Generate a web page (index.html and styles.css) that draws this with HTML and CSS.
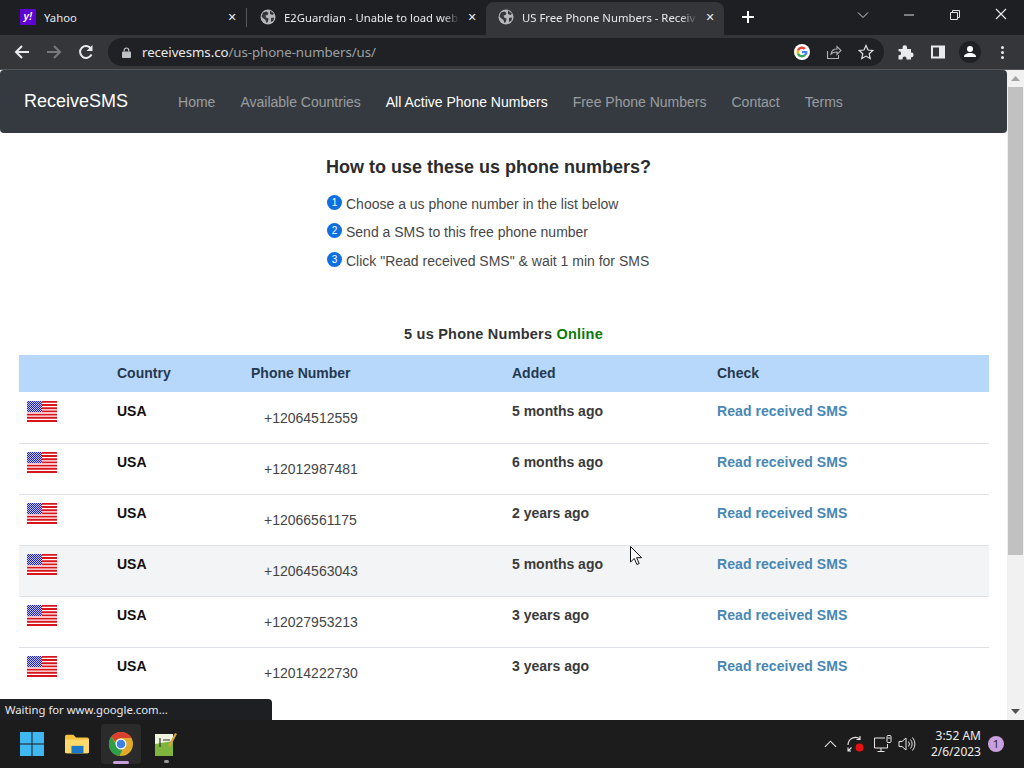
FILE: index.html
```html
<!DOCTYPE html>
<html lang="en">
<head>
<meta charset="utf-8">
<title>US Free Phone Numbers</title>
<link rel="stylesheet" href="styles.css">
</head>
<body>
<svg class="defs" width="0" height="0" aria-hidden="true">
  <defs>
    <pattern id="stars" width="2" height="2" patternUnits="userSpaceOnUse"><rect width="2" height="2" fill="#1c1ccf"/><rect width="1" height="1" fill="#c8c8f5"/><rect x="1" y="1" width="1" height="1" fill="#c8c8f5"/></pattern>
    <symbol id="flag" viewBox="0 0 30 21">
      <rect width="30" height="21" fill="#fff"/>
      <path d="M0 0.8h30M0 4h30M0 7.2h30M0 10.4h30M0 13.6h30M0 16.8h30M0 20h30" stroke="#d8141c" stroke-width="1.9"/>
      <rect width="15" height="11" fill="url(#stars)"/>
    </symbol>
    <symbol id="globe" viewBox="0 0 16 16">
      <circle cx="8" cy="8" r="7.5" fill="#b4b6b9"/>
      <path d="M3 3.500l3.500-1 2 1.500-1 2-2 .5.5 2 2.500 1-.5 3-1.500 1.500-1-3-2-1.500-2-2zM10 1.500l4 3-1.500 1.500-2.500-1zM11 9l3-.5-.5 3-2.500 1.500z" fill="#35363a"/>
    </symbol>
  </defs>
</svg>
<div class="tabstrip">
  <div class="tab tab-yahoo">
    <span class="yahoo-icon">y!</span><span class="tab-title">Yahoo</span><span class="tab-x">✕</span>
  </div>
  <div class="tab-sep"></div>
  <div class="tab tab-e2">
    <svg class="tab-icon"><use href="#globe"/></svg><span class="tab-title fade">E2Guardian - Unable to load web</span><span class="tab-x">✕</span>
  </div>
  <div class="tab tab-active">
    <svg class="tab-icon"><use href="#globe"/></svg><span class="tab-title fade">US Free Phone Numbers - Receiv</span><span class="tab-x">✕</span>
  </div>
  <svg class="newtab" viewBox="0 0 12 12"><path d="M6 0v12M0 6h12" stroke="#fff" stroke-width="2"/></svg>
  <div class="winctl">
    <svg viewBox="0 0 12 12" class="wc wc-chev"><path d="M1 3.500l5 5 5-5" fill="none" stroke="#d4d4d4"/></svg>
    <svg viewBox="0 0 12 12" class="wc wc-min"><path d="M1 6h10" stroke="#e0e0e0"/></svg>
    <svg viewBox="0 0 12 12" class="wc wc-max"><path d="M1.500 3.500h7v7h-7zM3.500 3V1.500h7v7H9" fill="none" stroke="#e0e0e0"/></svg>
    <svg viewBox="0 0 12 12" class="wc wc-close"><path d="M1 1l10 10M11 1L1 11" stroke="#eee" stroke-width="1.100"/></svg>
  </div>
</div>
<div class="toolbar">
  <svg class="tb-btn" viewBox="0 0 16 16"><path d="M15 8H2.500M8 2L2 8l6 6" fill="none" stroke="#e8eaed" stroke-width="2"/></svg>
  <svg class="tb-btn" viewBox="0 0 16 16"><path d="M1 8h12.500M8 2l6 6-6 6" fill="none" stroke="#77797c" stroke-width="2"/></svg>
  <svg class="tb-btn" viewBox="0 0 16 16"><path d="M13.500 10.500A6 6 0 1 1 13 4.500" fill="none" stroke="#e8eaed" stroke-width="2"/><path d="M14.500 1v6h-6z" fill="#e8eaed"/></svg>
  <div class="omnibox">
    <svg class="lock" viewBox="0 0 10 12"><path d="M2.500 5V3.500a2.500 2.500 0 0 1 5 0V5" fill="none" stroke="#bdc1c6" stroke-width="1.300"/><rect y="5" width="10" height="7" rx="1" fill="#bdc1c6"/></svg>
    <span class="url"><span class="url-host">receivesms.co</span>/us-phone-numbers/us/</span>
    <svg class="omni-g" viewBox="0 0 16 16">
      <circle cx="8" cy="8" r="8" fill="#fff"/>
      <path d="M8 5a3 3 0 0 1 2 .8l1.800-1.800A5.600 5.600 0 0 0 3 5.500l2 1.600A3.200 3.200 0 0 1 8 5z" fill="#ea4335"/>
      <path d="M3 5.500a5.600 5.600 0 0 0 0 5l2-1.600a3.200 3.200 0 0 1 0-1.800z" fill="#fbbc05"/>
      <path d="M3 10.500a5.600 5.600 0 0 0 8.700 1.500l-1.900-1.500A3.200 3.200 0 0 1 5 8.900z" fill="#34a853"/>
      <path d="M13.500 8c0-.4 0-.7-.1-1H8v2.300h3.100a2.700 2.700 0 0 1-1.300 1.200l1.900 1.500A5.500 5.500 0 0 0 13.500 8z" fill="#4285f4"/>
    </svg>
    <svg class="omni-i" viewBox="0 0 16 16"><path d="M1.500 7v7.500h11V11M5 10c.5-3 3-5 6-5V2.500L15 6.500l-4 4V8c-2.500 0-4.500.5-6 2z" fill="none" stroke="#aeb1b5" stroke-width="1.100"/></svg>
    <svg class="omni-i omni-star" viewBox="0 0 16 16"><path d="M8 1.500l2 4.500 4.800.5-3.600 3.200 1 4.800L8 12.100l-4.200 2.400 1-4.800L1.200 6.500 6 6z" fill="none" stroke="#dfe1e4" stroke-width="1.200"/></svg>
  </div>
  <svg class="tb-ext" viewBox="0 0 16 16"><path d="M.5 5h4V3.500a2.300 2.300 0 0 1 4.600 0V5H13v3.600h.3a2.300 2.300 0 0 1 0 4.600H13V15.500H8.500v-1a2 2 0 0 0-4 0v1H.5v-4.200h.6a2 2 0 0 0 0-4H.5z" fill="#e8eaed"/></svg>
  <svg class="tb-ext" viewBox="0 0 16 16"><path d="M1 1.500h14v13H1z" fill="#e8eaed"/><rect x="3" y="3.500" width="6" height="9" fill="#35363a"/></svg>
  <div class="avatar"><svg viewBox="0 0 16 16"><circle cx="8" cy="5" r="3" fill="#fff"/><path d="M2 13c0-3 3-4 6-4s6 1 6 4z" fill="#fff"/></svg></div>
  <div class="kebab"><i></i><i></i><i></i></div>
</div>
<div class="viewport">
  <main class="page">
    <nav class="navbar">
      <a class="brand">ReceiveSMS</a>
      <div class="navlinks">
        <a>Home</a>
        <a>Available Countries</a>
        <a class="current">All Active Phone Numbers</a>
        <a>Free Phone Numbers</a>
        <a>Contact</a>
        <a>Terms</a>
      </div>
    </nav>
    <section class="howto">
      <h2>How to use these us phone numbers?</h2>
      <p><span class="num">1</span>Choose a us phone number in the list below</p>
      <p><span class="num">2</span>Send a SMS to this free phone number</p>
      <p><span class="num">3</span>Click "Read received SMS" &amp; wait 1 min for SMS</p>
    </section>
    <h3 class="count">5 us Phone Numbers <span class="online">Online</span></h3>
    <table class="numbers">
      <thead>
        <tr><th class="c-flag"></th><th class="c-country">Country</th><th class="c-phone">Phone Number</th><th class="c-added">Added</th><th>Check</th></tr>
      </thead>
      <tbody>
        <tr><td><svg class="flag"><use href="#flag"/></svg></td><td class="country">USA</td><td class="phone">+12064512559</td><td class="added">5 months ago</td><td><a class="read">Read received SMS</a></td></tr>
        <tr><td><svg class="flag"><use href="#flag"/></svg></td><td class="country">USA</td><td class="phone">+12012987481</td><td class="added">6 months ago</td><td><a class="read">Read received SMS</a></td></tr>
        <tr><td><svg class="flag"><use href="#flag"/></svg></td><td class="country">USA</td><td class="phone">+12066561175</td><td class="added">2 years ago</td><td><a class="read">Read received SMS</a></td></tr>
        <tr class="hover"><td><svg class="flag"><use href="#flag"/></svg></td><td class="country">USA</td><td class="phone">+12064563043</td><td class="added">5 months ago</td><td><a class="read">Read received SMS</a></td></tr>
        <tr><td><svg class="flag"><use href="#flag"/></svg></td><td class="country">USA</td><td class="phone">+12027953213</td><td class="added">3 years ago</td><td><a class="read">Read received SMS</a></td></tr>
        <tr><td><svg class="flag"><use href="#flag"/></svg></td><td class="country">USA</td><td class="phone">+12014222730</td><td class="added">3 years ago</td><td><a class="read">Read received SMS</a></td></tr>
      </tbody>
    </table>
  </main>
  <div class="scrollbar">
    <svg class="sb-arrow" viewBox="0 0 9 5"><path d="M0 5l4.500-5L9 5z" fill="#a3a3a3"/></svg>
    <div class="sb-thumb"></div>
    <svg class="sb-arrow sb-down" viewBox="0 0 9 5"><path d="M0 0l4.500 5L9 0z" fill="#505050"/></svg>
  </div>
  <div class="status">Waiting for www.google.com...</div>
  <svg class="cursor" viewBox="0 0 12 20"><path d="M.5.500v15.500l3.800-3.500 2.600 6 2.300-1-2.600-5.800h5z" fill="#fff" stroke="#111"/></svg>
</div>
<footer class="taskbar">
  <div class="task-apps">
    <div class="app"><svg viewBox="0 0 24 24"><path d="M0 0h11.500v11.500H0zM12.500 0H24v11.500H12.500zM0 12.500h11.500V24H0zM12.500 12.500H24V24H12.500z" fill="#3fb8f2"/></svg></div>
    <div class="app"><svg viewBox="0 0 26 22"><path d="M0 3a2 2 0 0 1 2-2h7l3 3h12a2 2 0 0 1 2 2v13a2 2 0 0 1-2 2H2a2 2 0 0 1-2-2z" fill="#f5c33f"/><path d="M0 6h26v13a2 2 0 0 1-2 2H2a2 2 0 0 1-2-2z" fill="#fcd96a"/><rect x="7" y="13" width="13" height="8" fill="#1d78c8"/></svg></div>
    <div class="app app-active"><svg viewBox="0 0 24 24"><circle cx="12" cy="12" r="12" fill="#e0a92a"/><path d="M12 0a12 12 0 0 1 10.400 6H12a6 6 0 0 0-5.700 4L2.500 4.500A12 12 0 0 1 12 0z" fill="#d9402f"/><path d="M2.500 4.500L7 12.500a6 6 0 0 0 7 3.200L10.500 24A12 12 0 0 1 2.500 4.500z" fill="#2f9e48"/><circle cx="12" cy="12" r="5.500" fill="#fff"/><circle cx="12" cy="12" r="4.300" fill="#3b82e6"/></svg><span class="app-bar"></span></div>
    <div class="app"><svg viewBox="0 0 22 24"><path d="M0 2h18v22H0z" fill="#eef3dc"/><path d="M0 12l18-3v15H0z" fill="#7fb53c"/><path d="M5 6v9M8 8h7" stroke="#333" stroke-width="1.200"/><path d="M13 14L20 1l2 1-7 13z" fill="#d6a23a"/></svg><span class="app-dot"></span></div>
  </div>
  <div class="tray">
    <svg class="tray-i" viewBox="0 0 14 8"><path d="M1 7l6-6 6 6" fill="none" stroke="#e8e8e8" stroke-width="1.200"/></svg>
    <svg class="tray-sync" viewBox="0 0 18 18"><path d="M1 10a7.500 7.500 0 0 1 12-6M13 1v3.500H9.500M4 16H1v-3.500M1.500 15.500l3-3" fill="none" stroke="#e8e8e8" stroke-width="1.100"/><circle cx="12.500" cy="12.500" r="4" fill="#e81212"/></svg>
    <svg class="tray-net" viewBox="0 0 18 18"><path d="M11 3H.5v10h13V9M7 13v3M3.500 16.500h7" fill="none" stroke="#e8e8e8"/><rect x="13" y=".5" width="4" height="7" rx="1" fill="none" stroke="#e8e8e8"/><path d="M13.500 3h3" stroke="#e8e8e8"/></svg>
    <svg class="tray-vol" viewBox="0 0 18 18"><path d="M1 6.500h3L8 3v12L4 11.500H1zM10.500 6.500a4 4 0 0 1 0 5M12.500 4.500a7 7 0 0 1 0 9M14.500 2.500a10 10 0 0 1 0 13" fill="none" stroke="#e8e8e8"/></svg>
    <div class="clock"><span>3:52 AM</span><span>2/6/2023</span></div>
    <span class="notif">1</span>
  </div>
</footer>
</body>
</html>
```
FILE: styles.css
```css
* { box-sizing: border-box; }
html, body { margin: 0; height: 100%; overflow: hidden; }
body {
  display: flex;
  flex-direction: column;
  width: 1024px;
  height: 768px;
  font-family: "Liberation Sans", Arial, sans-serif;
  background: #fff;
}
.defs { position: absolute; }

/* tab strip */
.tabstrip {
  height: 35px;
  flex: none;
  display: flex;
  background: #1e1f22;
  color: #e8eaed;
  font: 11.300px "Noto Sans", "Open Sans", sans-serif;
  padding-top: 2px;
}
.tab {
  display: flex;
  align-items: center;
  height: 33px;
  padding-bottom: 3px;
  position: relative;
}
.tab-yahoo { width: 246px; padding-left: 20px; padding-right: 6px; }
.tab-sep { width: 1px; height: 19px; margin-top: 6px; background: #54565a; }
.tab-e2 { width: 239px; padding-left: 13px; padding-right: 6px; }
.tab-active {
  width: 238px;
  background: #35363a;
  border-radius: 8px 8px 0 0;
  padding-left: 12px;
  padding-right: 6px;
}
.yahoo-icon {
  width: 16px; height: 16px;
  margin-right: 8px;
  background: #5f01d1;
  color: #fff;
  font: italic bold 10px/16px "Liberation Sans", sans-serif;
  text-align: center;
  flex: none;
}
.tab-icon { width: 16px; height: 16px; margin-right: 8px; flex: none; }
.tab-title { flex: 1; min-width: 0; white-space: nowrap; overflow: hidden; }
.fade { -webkit-mask-image: linear-gradient(90deg, #000 90%, transparent); mask-image: linear-gradient(90deg, #000 90%, transparent); }
.tab-x { width: 16px; flex: none; text-align: center; font: bold 11px "DejaVu Sans", sans-serif; color: #e8eaed; margin-left: 4px; }
.newtab { width: 12px; height: 12px; margin: 9px 0 0 18px; flex: none; }
.winctl { display: flex; margin-left: auto; position: relative; flex: none; width: 190px; }
.wc { position: absolute; top: 7px; width: 12px; height: 12px; }
.wc-chev { left: 23px; }
.wc-min { left: 69px; }
.wc-max { left: 115px; }
.wc-close { left: 161px; top: 6px; }

/* toolbar */
.toolbar {
  height: 35px;
  flex: none;
  display: flex;
  align-items: center;
  background: #35363a;
  padding-left: 14px;
  border-bottom: 1px solid #55565a;
}
.tb-btn { width: 16px; height: 16px; margin-right: 16px; flex: none; }
.omnibox {
  width: 776px;
  height: 28px;
  background: #202124;
  border-radius: 14px;
  display: flex;
  align-items: center;
  padding-left: 14px;
  margin-left: -2px;
  flex: none;
}
.lock { width: 9px; height: 11px; margin-right: 11px; flex: none; }
.url { font: 13.300px "Noto Sans", "Open Sans", sans-serif; color: #9aa0a6; flex: 1; white-space: nowrap; letter-spacing: -.08px; }
.url-host { color: #e8eaed; }
.omni-g { width: 16px; height: 16px; margin-right: 16px; flex: none; }
.omni-i { width: 16px; height: 16px; margin-right: 16px; flex: none; }
.omni-star { margin-right: 10px; }
.tb-ext { width: 16px; height: 16px; margin-left: 14px; flex: none; }
.tb-ext + .tb-ext { margin-left: 16px; }
.avatar { width: 22px; height: 22px; border-radius: 50%; background: #202124; margin-left: 13px; padding: 3px; flex: none; }
.avatar svg { display: block; width: 16px; height: 16px; }
.kebab { display: flex; flex-direction: column; gap: 2px; margin-left: 20px; }
.kebab i { width: 3px; height: 3px; border-radius: 50%; background: #e8eaed; }

/* viewport */
.viewport { flex: 1; min-height: 0; display: flex; position: relative; overflow: hidden; background: #fff; }
.page { flex: 1; min-width: 0; overflow: hidden; }
.navbar {
  height: 63px;
  background: #343a40;
  border-radius: 4px;
  display: flex;
  align-items: center;
  padding-left: 24px;
}
.brand { color: #fff; font-size: 18px; margin-right: 50px; }
.navlinks { display: flex; gap: 25px; font-size: 14px; color: rgba(255,255,255,.5); }
.navlinks .current { color: #fff; }

.howto { margin: 24px 0 0 326px; color: #474747; }
.howto h2 { margin: 0 0 11.700px; font-size: 18px; line-height: 21px; color: #2a2c2e; }
.howto p { margin: 0; height: 28.500px; font-size: 14px; line-height: 28.500px; display: flex; }
.num {
  width: 15px; height: 15px;
  margin: 5px 4px 0 1px;
  border-radius: 50%;
  background: #0d6fe0;
  color: #fff;
  font-size: 10px;
  line-height: 15px;
  text-align: center;
  flex: none;
}
.count { margin: 50.800px 0 12px; text-align: center; font-size: 14.500px; line-height: 17px; color: #333; letter-spacing: .22px; }
.online { color: #0a7a0a; }

.numbers { width: 970px; margin-left: 19px; border-collapse: separate; border-spacing: 0; table-layout: fixed; font-size: 14px; }
.numbers th { height: 38px; padding: 0; border-bottom: 1px solid #fff; text-align: left; background: #b8d8fb; color: #24384e; }
.c-flag { width: 98px; }
.c-country { width: 134px; }
.c-phone { width: 261px; }
.c-added { width: 205px; }
.numbers td { height: 51px; padding: 8px 0 0; vertical-align: top; border-bottom: 1px solid #dee2e6; font-weight: bold; color: #212529; line-height: 20px; }
.numbers td:first-child { padding: 8px 0 0 8px; }
.numbers tr.hover td { background: #f3f4f5; }
.numbers tbody tr:last-child td { border-bottom: 0; }
.flag { display: block; width: 30px; height: 21px; }
.country { color: #101010 !important; }
.numbers td.phone { font-weight: normal; padding: 15px 0 0 13px; color: #444; }
.numbers td.added { color: #3a3a3a; }
.read { color: #4887b4; letter-spacing: .07px; }

.scrollbar { width: 17px; flex: none; background: #f1f1f1; display: flex; flex-direction: column; align-items: center; position: relative; padding-top: 6px; }
.sb-arrow { width: 9px; height: 5px; flex: none; }
.sb-thumb { width: 15px; height: 468px; margin-top: 6px; background: #c1c1c1; flex: none; }
.sb-down { margin-top: auto; margin-bottom: 6px; }
.status {
  position: absolute;
  left: 0; bottom: 0;
  width: 272px; height: 21px;
  padding: 2px 0 0 5px;
  background: #1e1f22;
  color: #e8eaed;
  border-radius: 0 4px 0 0;
  font: 11.300px/18px "Noto Sans", "Open Sans", sans-serif;
}
.cursor { position: absolute; left: 630px; top: 476px; width: 12px; height: 20px; }

/* taskbar */
.taskbar { height: 48px; flex: none; background: #1c1c1c; display: flex; justify-content: space-between; align-items: center; color: #fff; }
.task-apps { display: flex; padding-left: 12px; gap: 4.500px; height: 100%; align-items: center; }
.app { width: 40px; height: 40px; display: flex; align-items: center; justify-content: center; position: relative; border-radius: 4px; }
.app svg { width: 24px; height: 24px; display: block; }
.app-active { background: #2b2b2b; }
.app-bar { position: absolute; bottom: 0; left: 12px; width: 16px; height: 3px; border-radius: 2px; background: #c9a0dc; }
.app-dot { position: absolute; bottom: 1px; left: 18px; width: 5px; height: 3px; border-radius: 2px; background: #9a9a9a; }
.tray { display: flex; align-items: center; padding-right: 20px; }
.tray-i { width: 13px; height: 8px; margin-right: 10px; }
.tray-sync { width: 18px; height: 18px; margin-right: 9px; }
.tray-net { width: 18px; height: 18px; margin-right: 6px; }
.tray-vol { width: 18px; height: 18px; margin-right: 15px; }
.clock { display: flex; flex-direction: column; align-items: flex-end; font: 12px/16px "Noto Sans", "Open Sans", sans-serif; color: #eee; }
.notif { width: 16px; height: 16px; margin-left: 7px; border-radius: 50%; background: #c9a0dc; color: #222; font: 10.500px/16px "Noto Sans", sans-serif; text-align: center; }
```
